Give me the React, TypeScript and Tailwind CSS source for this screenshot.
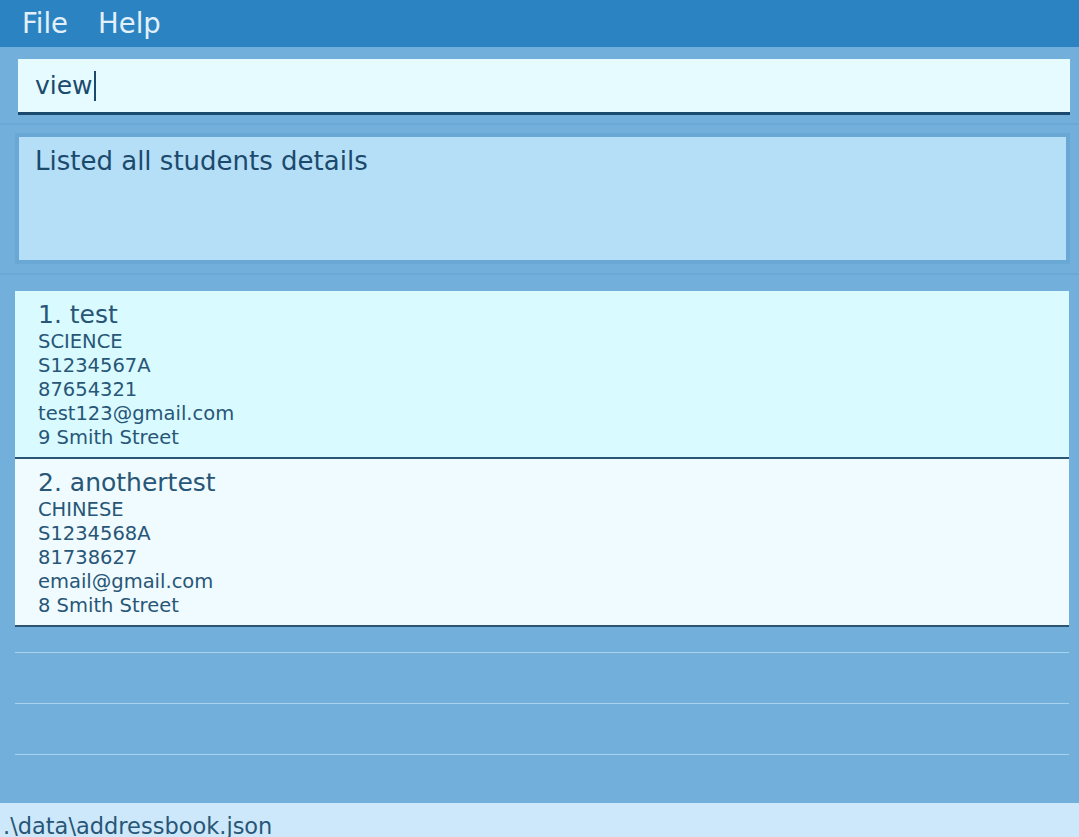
import React from 'react';

const students = [
  {
    id: 1,
    name: 'test',
    subject: 'SCIENCE',
    nric: 'S1234567A',
    phone: '87654321',
    email: 'test123@gmail.com',
    address: '9 Smith Street',
  },
  {
    id: 2,
    name: 'anothertest',
    subject: 'CHINESE',
    nric: 'S1234568A',
    phone: '81738627',
    email: 'email@gmail.com',
    address: '8 Smith Street',
  },
];

const font = { fontFamily: '"DejaVu Sans", Verdana, sans-serif' };

function StudentCard({ s, selected }: { s: (typeof students)[number]; selected: boolean }) {
  return (
    <div
      className={`h-[168px] pl-[23px] pt-[9px] border-b-2 border-[#2b5573] ${
        selected ? 'bg-[#d9faff]' : 'bg-[#f0fbff]'
      } text-[#285676]`}
    >
      <div className="text-[25px] leading-[30px]">
        {s.id}. {s.name}
      </div>
      {[s.subject, s.nric, s.phone, s.email, s.address].map((line) => (
        <div key={line} className="text-[19.5px] leading-[24px]">
          {line}
        </div>
      ))}
    </div>
  );
}

export default function App() {
  return (
    <div style={font} className="h-[837px] w-full overflow-hidden bg-[#72afda] flex flex-col">
      {/* menu bar */}
      <div className="h-[47px] bg-[#2b84c1] flex items-center gap-[30px] pl-[22px] pt-[1px] text-[27.5px] text-[#e3f0fa] shrink-0">
        <span>File</span>
        <span>Help</span>
      </div>

      {/* command box */}
      <div className="pt-[12px] pl-[18px] pr-[9px] pb-[8px]">
        <div className="h-[56px] bg-[#e5fbff] border-b-[3px] border-[#1b4a6c] flex items-center pl-[17px] text-[25px] text-[#1b4a6c]">
          <span>view</span>
          <span className="w-[2px] h-[30px] bg-[#1b4a6c] ml-[1px]" />
        </div>
      </div>
      <div className="h-[2px] bg-[#6aa9d5]" />

      {/* result display */}
      <div className="pt-[8px] pl-[15px] pr-[9px] pb-[9px]">
        <div className="h-[131px] border-[4px] border-[#69a8d5] bg-[#b5def7] pl-[16px] pt-[7px] text-[26px] text-[#1b4a6c] leading-[34px]">
          Listed all students details
        </div>
      </div>
      <div className="h-[2px] bg-[#6aa9d5]" />

      {/* student list */}
      <div className="flex-1 pt-[16px] pl-[15px] pr-[10px] flex flex-col min-h-0">
        {students.map((s, i) => (
          <StudentCard key={s.id} s={s} selected={i === 0} />
        ))}
        <div className="h-[26px] border-b border-[#a9d2ee]" />
        <div className="h-[51px] border-b border-[#a9d2ee]" />
        <div className="h-[51px] border-b border-[#a9d2ee]" />
        <div className="flex-1" />
      </div>

      {/* status bar */}
      <div className="h-[34px] shrink-0 bg-[#cde8fa] pl-[3px] pt-[10px] text-[22.5px] leading-[26px] text-[#285676] whitespace-nowrap">
        .\data\addressbook.json
      </div>
    </div>
  );
}
